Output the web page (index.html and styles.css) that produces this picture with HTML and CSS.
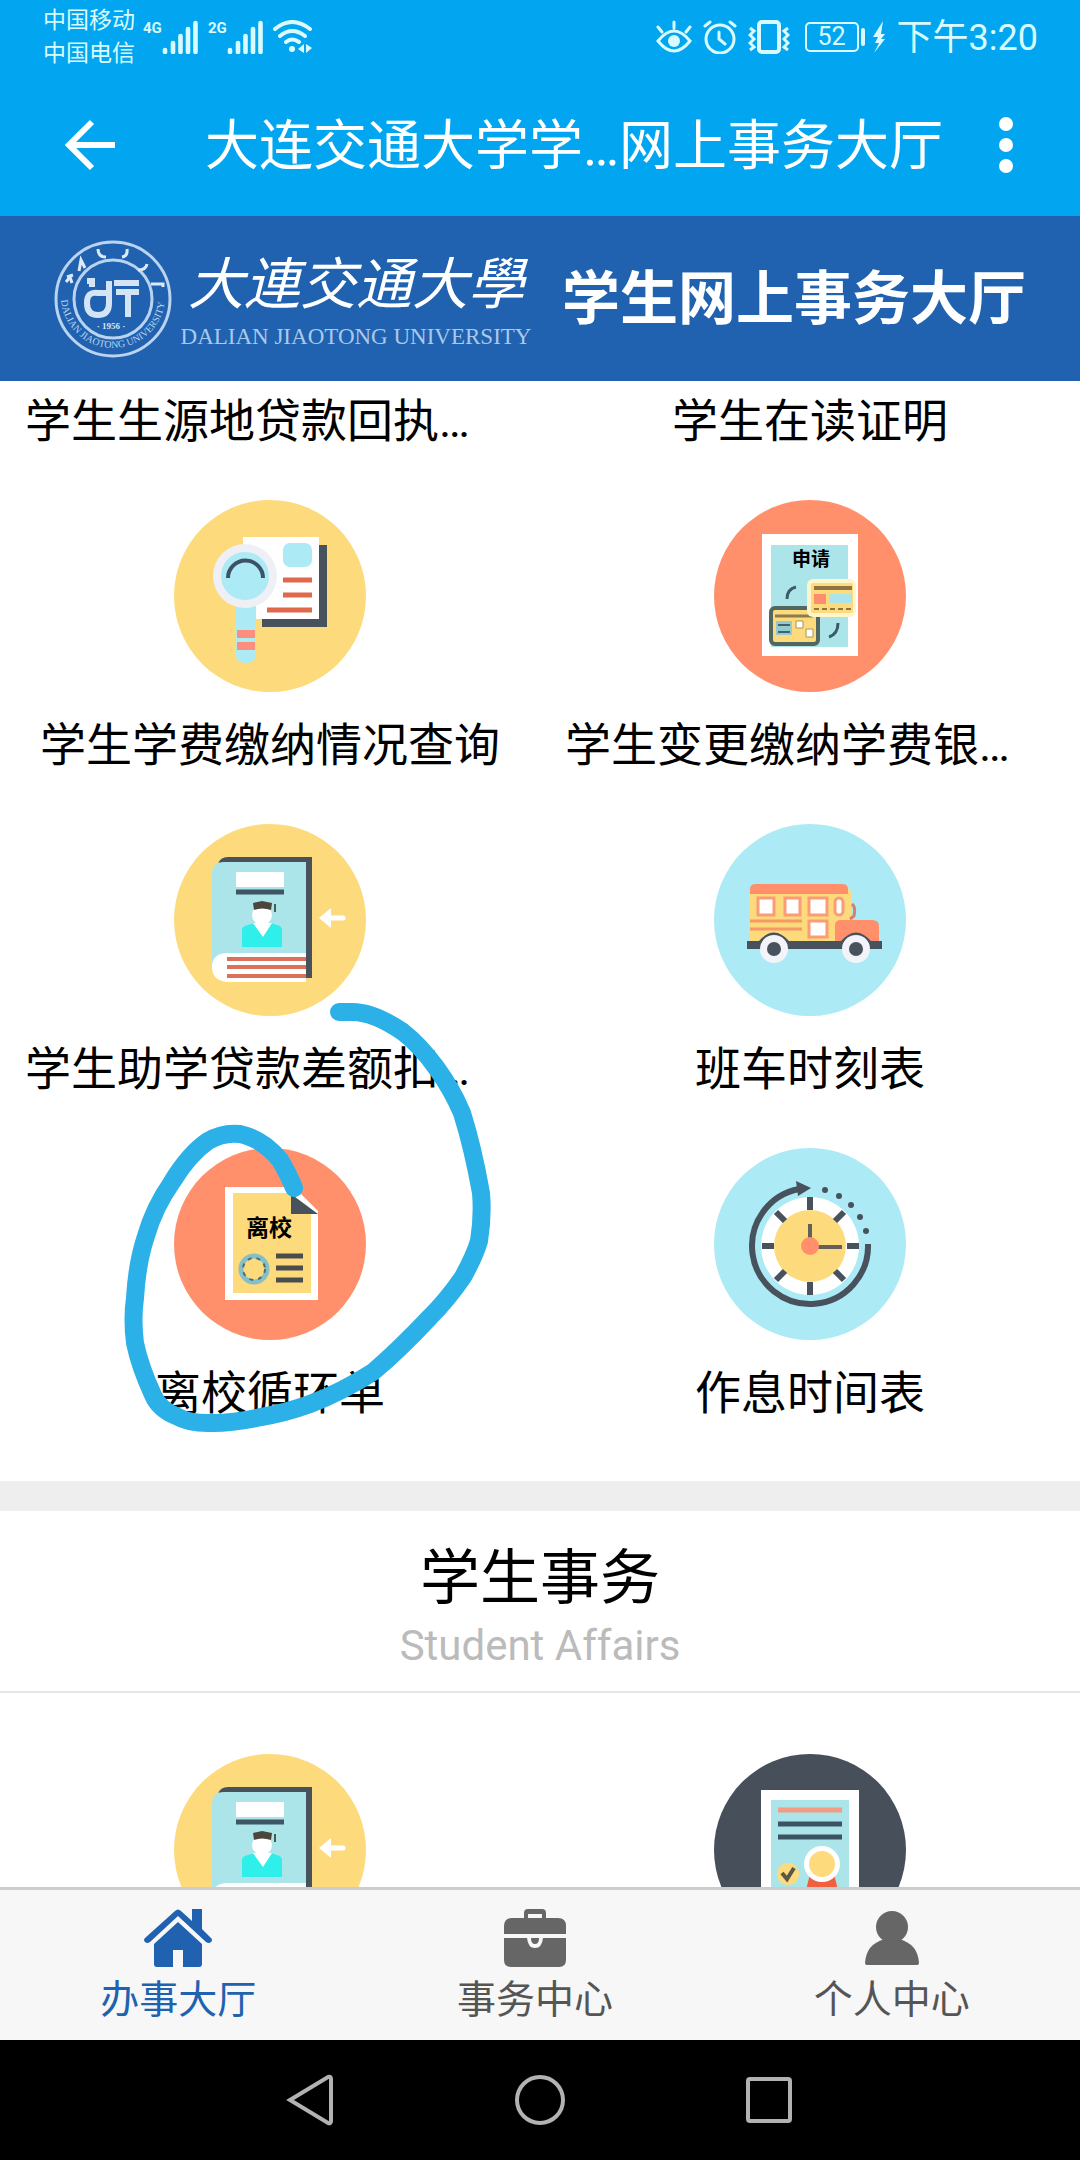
FILE: index.html
```html
<!DOCTYPE html>
<html lang="zh-CN">
<head>
<meta charset="utf-8">
<meta name="viewport" content="width=device-width, initial-scale=1">
<title>学生网上事务大厅</title>
<link rel="stylesheet" href="styles.css">
</head>
<body>
<svg class="defs" aria-hidden="true">
  <symbol id="signal" viewBox="0 0 36 34">
    <path d="M3 30v2M11 23v9M18.500 16v16M26 9v23M33.500 3v29" stroke="currentColor" stroke-width="4.600" stroke-linecap="round"/>
  </symbol>
  <symbol id="book" viewBox="0 0 192 192">
    <circle cx="96" cy="96" r="96" fill="#fddb7c"/>
    <path d="M44 40q2-7 10-7h84v121h-8V40z" fill="#47525d"/>
    <path d="M38 146V50q0-12 12-12h82v108z" fill="#abe5ea"/>
    <path d="M62 48h48v15H62z" fill="#fff"/>
    <path d="M62 68h48" stroke="#3f5564" stroke-width="5"/>
    <path d="M68 123v-17q0-4 6-5l7-2 8 9 8-9 6 2q5 1 5 5v17z" fill="#2eefea"/>
    <path d="M79 99l10 14 9-14z" fill="#fff"/>
    <circle cx="88" cy="91" r="10" fill="#fff"/>
    <path d="M79 79l9-2 10 2-1 7q-9-3-17 0z" fill="#4b463d"/>
    <path d="M101 80v8" stroke="#4b5a52" stroke-width="2"/>
    <path d="M132 129H52q-14 1-14 14t14 15h80z" fill="#fff"/>
    <path d="M53 135h79M53 143h79M53 152h79" stroke="#da725b" stroke-width="4"/>
    <path d="M135 128v26" stroke="#47525d" stroke-width="5"/>
    <path d="M169 94h-18" stroke="#fff" stroke-width="5" stroke-linecap="round"/>
    <path d="M145 94l12-10v20z" fill="#fff"/>
  </symbol>
</svg>

<div class="screen">
  <header class="top">
    <div class="status">
      <div class="carriers"><span>中国移动</span><span>中国电信</span></div>
      <div class="signals">
        <span class="net">4G</span><svg class="bars"><use href="#signal"/></svg>
        <span class="net">2G</span><svg class="bars"><use href="#signal"/></svg>
      </div>
      <svg class="wifi" viewBox="0 0 40 34" fill="none" stroke="currentColor" stroke-width="4" stroke-linecap="round">
        <path d="M2 9Q19-5 37 9M7 16q12-10 25 0M13 22q6-5 13 0"/>
        <circle cx="19" cy="29" r="3" fill="currentColor" stroke="none"/>
        <path d="M31 24v9l-6-4zM33 24v9l6-5z" fill="currentColor" stroke="none"/>
      </svg>
      <div class="status-right">
        <svg width="36" height="34" viewBox="0 0 36 34" fill="none" stroke="currentColor" stroke-width="3" stroke-linecap="round">
          <path d="M2 21q16-20 32 0-16 20-32 0zM18 2v6M2 7l4 5M34 7l-4 5"/><circle cx="18" cy="21" r="6" fill="currentColor" stroke="none"/>
        </svg>
        <svg width="34" height="34" viewBox="0 0 34 34" fill="none" stroke="currentColor" stroke-width="3" stroke-linecap="round">
          <circle cx="17" cy="19" r="14"/><path d="M16 12v7l6 5M2 6l5-4M32 6l-5-4"/>
        </svg>
        <svg width="42" height="34" viewBox="0 0 42 34" fill="none" stroke="currentColor" stroke-width="3">
          <rect x="11" y="2" width="20" height="30" rx="3" stroke-width="4"/>
          <path d="M2 8l4 3-4 4 4 4-4 4 4 4-4 3M40 8l-4 3 4 4-4 4 4 4-4 4 4 3"/>
        </svg>
        <span class="battery"><span class="level">52</span><span class="cap"></span></span>
        <svg width="14" height="34" viewBox="0 0 14 34" fill="currentColor"><path d="M11 1L1 17h5l-3 6h4L2 33l11-14H9l4-5H9z"/></svg>
        <time class="clock">下午3:20</time>
      </div>
    </div>
    <div class="titlebar">
      <button class="icon-button" type="button" aria-label="返回">
        <svg width="52" height="52" viewBox="0 0 52 52" fill="none" stroke="currentColor" stroke-width="6"><path d="M28 3L5 26l23 23M5 26h46"/></svg>
      </button>
      <h1 class="page-title">大连交通大学学…网上事务大厅</h1>
      <button class="icon-button more" type="button" aria-label="更多">
        <svg width="16" height="60" viewBox="0 0 16 60" fill="currentColor"><circle cx="8" cy="9" r="7"/><circle cx="8" cy="30" r="7"/><circle cx="8" cy="51" r="7"/></svg>
      </button>
    </div>
  </header>

  <div class="banner">
    <svg class="seal" viewBox="0 0 118 118" fill="none" stroke="#b9d3f0">
      <defs><path id="ring" d="M7 56a52 52 0 1 0 104 0"/></defs>
      <circle cx="59" cy="59" r="57" stroke-width="3"/>
      <circle cx="59" cy="59" r="39" stroke-width="3"/>
      <path d="M12 42l4-5 2 6M13 37l6-2M25 31l2-11 4 8M44 9q0 8 8 8M68 17q6-1 5-8M84 30q8 0 9-6M97 44h12v3" stroke="#dceafa" stroke-width="3"/>
      <path d="M33 41h5v6M55 41v22q0 12-11 12T33 63t11-10h9M60 43h25M62 52h23M74 54v23" stroke="#d3e4f7" stroke-width="6"/>
      <text class="seal-text" fill="#b9d3f0" stroke="none"><textPath href="#ring" startOffset="4">DALIAN JIAOTONG UNIVERSITY</textPath></text>
      <text class="seal-year" x="57" y="89" text-anchor="middle" fill="#d3e4f7" stroke="none">· 1956 ·</text>
    </svg>
    <div class="school">
      <span class="school-cn">大連交通大學</span>
      <span class="school-en">DALIAN JIAOTONG UNIVERSITY</span>
    </div>
    <strong class="hall">学生网上事务大厅</strong>
  </div>

  <main class="content">
    <section class="group">
      <div class="grid">
        <a class="card" href="#loan"><span class="label label-cut">学生生源地贷款回执…</span></a>
        <a class="card" href="#proof"><span class="label">学生在读证明</span></a>

        <a class="card" href="#fees">
          <svg class="icon" viewBox="0 0 192 192">
            <circle cx="96" cy="96" r="96" fill="#fddb7c"/>
            <path d="M88 45h65v82H88z" fill="#47525d"/>
            <path d="M69 37h76v82H69z" fill="#fff"/>
            <rect x="109" y="43" width="29" height="24" rx="7" fill="#aceaf5"/>
            <path d="M109 80h29M109 95h29M93 110h45" stroke="#e0684d" stroke-width="5"/>
            <path d="M62 104h20v48q0 11-10 11t-10-8z" fill="#aceaf5"/>
            <path d="M63 134h18M63 146h18" stroke="#fa8f7b" stroke-width="8"/>
            <circle cx="71" cy="76" r="32" fill="#eef0f6"/>
            <circle cx="71" cy="76" r="24" fill="#aceaf5"/>
            <path d="M54 78a17 17 0 1 1 35 0" fill="none" stroke="#3d5365" stroke-width="4"/>
          </svg>
          <span class="label">学生学费缴纳情况查询</span>
        </a>
        <a class="card" href="#bank">
          <svg class="icon" viewBox="0 0 192 192">
            <circle cx="96" cy="96" r="96" fill="#ff906b"/>
            <path d="M48 34h96v122H48z" fill="#fff"/>
            <path d="M57 45h77v102H57z" fill="#abe5ea"/>
            <text class="stamp-small" x="97" y="66" text-anchor="middle">申请</text>
            <rect x="57" y="108" width="47" height="36" rx="4" fill="#fddb7c" stroke="#52675f" stroke-width="4"/>
            <path d="M61 116h38" stroke="#8b7b4d" stroke-width="3"/>
            <path d="M62 121h16v14H62z" fill="#94cbd0"/>
            <path d="M64 125h12M64 132h12" stroke="#43606b" stroke-width="2"/>
            <path d="M82 121h7v7h-7zM92 129h7v8h-7z" fill="#fff" stroke="#ab9457"/>
            <rect x="93" y="79" width="49" height="38" rx="6" fill="#fff4ca"/>
            <rect x="97" y="83" width="42" height="30" rx="2" fill="#fddb7c"/>
            <path d="M100 88h38" stroke="#8d7444" stroke-width="4"/>
            <path d="M100 94h12v10h-12z" fill="#fd8d70"/><path d="M115 94h23v9h-23z" fill="#abe5ea"/>
            <path d="M100 109h38" stroke="#8d7444" stroke-width="2" stroke-dasharray="5 3"/>
            <path d="M73 99q0-10 9-12M124 123q0 11-9 14" fill="none" stroke="#3d5b66" stroke-width="3"/>
          </svg>
          <span class="label label-cut">学生变更缴纳学费银…</span>
        </a>

        <a class="card" href="#balance">
          <svg class="icon"><use href="#book"/></svg>
          <span class="label label-cut">学生助学贷款差额扣…</span>
        </a>
        <a class="card" href="#bus">
          <svg class="icon" viewBox="0 0 192 192">
            <circle cx="96" cy="96" r="96" fill="#aceaf5"/>
            <path d="M36 65h101v53H36z" fill="#fddb7c"/>
            <path d="M36 70v-5q0-5 6-5h86q6 0 6 5v5z" fill="#ff906b"/>
            <path d="M36 97h52M36 105h52" stroke="#f59a64" stroke-width="3"/>
            <g fill="#fff" stroke="#fb9c76" stroke-width="3"><path d="M44 74h16v17H44zM71 74h15v17H71zM95 74h18v17H95zM95 97h18v16H95z"/><rect x="121" y="74" width="8" height="17" rx="4"/></g>
            <path d="M121 118v-17q0-5 6-5h31q7 0 7 6v16z" fill="#ff906b"/>
            <path d="M138 80q4 3 2 12l-4 3" fill="none" stroke="#d77e6c" stroke-width="3"/>
            <path d="M33 117h135v8H33z" fill="#47525d"/>
            <path d="M45 117q15-17 30 0zM127 117q15-17 30 0z" fill="#47525d"/>
            <g fill="#f2f4f9"><circle cx="60" cy="125" r="14"/><circle cx="142" cy="125" r="14"/></g>
            <g fill="#47525d"><circle cx="60" cy="125" r="7"/><circle cx="142" cy="125" r="7"/></g>
          </svg>
          <span class="label">班车时刻表</span>
        </a>

        <a class="card marked" href="#leave">
          <svg class="icon" viewBox="0 0 192 192">
            <circle cx="96" cy="96" r="96" fill="#ff906b"/>
            <path d="M51 39h69l24 24v89H51z" fill="#fff"/>
            <path d="M59 45h58v20h20v80H59z" fill="#fddb7c"/>
            <path d="M117 46l27 20h-27z" fill="#47525d"/>
            <text class="stamp" x="95" y="88" text-anchor="middle">离校</text>
            <circle cx="80" cy="121" r="13" fill="#fddb7c" stroke="#85c0c8" stroke-width="5"/>
            <circle cx="80" cy="121" r="11" fill="none" stroke="#556a70" stroke-width="2" stroke-dasharray="4 5"/>
            <path d="M102 108h27M102 120h27M102 132h27" stroke="#4b4d4c" stroke-width="5"/>
          </svg>
          <span class="label">离校循环单</span>
          <svg class="scribble" viewBox="120 1000 380 440" fill="none" stroke="#2bb1e8" stroke-width="18" stroke-linecap="round" stroke-linejoin="round">
            <path d="M339 1012H352C370 1012 387 1021 403 1032C426 1050 449 1082 462 1113Q473 1148 481 1193Q483 1216 479 1241Q475 1255 463 1277C452 1293 441 1306 430 1317Q399 1350 373 1372Q342 1392 310 1404Q285 1413 261 1417Q234 1423 213 1423Q190 1424 176 1416Q159 1409 153 1395Q140 1367 135 1343Q132 1319 135 1298Q137 1263 146 1236Q154 1208 172 1182Q189 1154 208 1141Q223 1132 240 1134Q263 1139 280 1160Q289 1175 294 1188"/>
          </svg>
        </a>
        <a class="card" href="#timetable">
          <svg class="icon" viewBox="0 0 192 192">
            <circle cx="96" cy="96" r="96" fill="#aceaf5"/>
            <circle cx="96" cy="98" r="49" fill="#fff"/><circle cx="96" cy="98" r="36" fill="#fddb7c"/>
            <path d="M154 96A58 58 0 1 1 85 41" fill="none" stroke="#47525d" stroke-width="6"/>
            <path d="M82 33l15 7-13 8z" fill="#47525d"/>
            <g stroke="#47525d" stroke-width="6"><path d="M96 49v13M96 134v13M48 98h12M133 98h12M62 64l9 9M130 64l-9 9M62 132l9-9M130 132l-9-9"/></g>
            <g fill="#47525d"><circle cx="111" cy="42" r="3"/><circle cx="125" cy="48" r="3"/><circle cx="137" cy="57" r="3"/><circle cx="146" cy="69" r="3"/><circle cx="152" cy="83" r="3"/></g>
            <path d="M96 76v15M104 99h24" stroke="#626058" stroke-width="4"/>
            <circle cx="96" cy="98" r="9" fill="#ff906b"/>
          </svg>
          <span class="label">作息时间表</span>
        </a>
      </div>
    </section>

    <section class="group">
      <header class="group-head">
        <h2 class="group-title">学生事务</h2>
        <p class="group-sub">Student Affairs</p>
      </header>
      <div class="grid grid-affairs">
        <a class="card" href="#affairs-loan" aria-label="助学贷款"><svg class="icon"><use href="#book"/></svg></a>
        <a class="card" href="#affairs-award" aria-label="奖励证书">
          <svg class="icon" viewBox="0 0 192 192">
            <circle cx="96" cy="96" r="96" fill="#474f5b"/>
            <path d="M47 36h98v120H47z" fill="#fff"/><path d="M57 46h78v102H57z" fill="#abe5ea"/>
            <path d="M64 56h64" stroke="#f29c86" stroke-width="5"/><path d="M64 70h64M64 83h64" stroke="#3a5464" stroke-width="5"/>
            <path d="M96 120l-6 24 18-6 18 6-6-24z" fill="#f0603e"/>
            <circle cx="108" cy="110" r="18" fill="#fff"/><circle cx="108" cy="110" r="13" fill="#fddb7c"/>
            <circle cx="74" cy="120" r="11" fill="#fddb7c"/><path d="M68 119l5 6 7-11" fill="none" stroke="#5a5746" stroke-width="4"/>
          </svg>
        </a>
      </div>
    </section>
  </main>

  <nav class="tabs">
    <a class="tab tab-active" href="#hall">
      <svg width="68" height="58" viewBox="0 0 68 58" fill="currentColor">
        <path d="M48 0h10v20l9 9q2 2 0 4-2 2-5 0L34 7 6 33q-3 2-5 0t0-4L31 2q3-3 6 0l11 10z"/>
        <path d="M34 13l24 22v20q0 3-3 3H39V41H29v17H13q-3 0-3-3V35z"/>
      </svg>
      <span>办事大厅</span>
    </a>
    <a class="tab" href="#center">
      <svg width="62" height="58" viewBox="0 0 62 58" fill="#666">
        <path d="M20 9V4q0-4 4-4h14q4 0 4 4v5h12q8 0 8 8v8H0v-8q0-8 8-8zM24 9h14V5H24z" fill-rule="evenodd"/>
        <path d="M0 29h23q1 10 8 10t8-10h23v22q0 7-7 7H7q-7 0-7-7z"/>
        <path d="M27 29h8q0 6-4 6t-4-6z"/>
      </svg>
      <span>事务中心</span>
    </a>
    <a class="tab" href="#me">
      <svg width="56" height="58" viewBox="0 0 56 58" fill="#666">
        <circle cx="28" cy="18" r="16"/><path d="M21 30h14q19 5 20 24 0 2-2 2H3q-2 0-2-2 1-19 20-24z"/>
      </svg>
      <span>个人中心</span>
    </a>
  </nav>

  <div class="sysnav">
    <button type="button" aria-label="后退"><svg width="52" height="52" viewBox="0 0 52 52"><path d="M5 26L43 3q3-1 3 2v42q0 3-3 2z"/></svg></button>
    <button type="button" aria-label="主屏幕"><svg width="52" height="52" viewBox="0 0 52 52"><circle cx="26" cy="26" r="23"/></svg></button>
    <button type="button" aria-label="最近任务"><svg width="52" height="52" viewBox="0 0 52 52"><rect x="5" y="5" width="42" height="42" rx="2"/></svg></button>
  </div>
</div>
</body>
</html>
```
FILE: styles.css
```css
* { box-sizing: border-box; }

body {
  margin: 0;
  background: #fff;
  color: #000;
  font-family: Roboto, "Noto Sans CJK SC", sans-serif;
}

h1, h2, p { margin: 0; font-weight: 400; }
a { color: inherit; text-decoration: none; }
button { border: 0; padding: 0; background: none; color: inherit; }
svg { display: block; flex: none; }
.defs { position: absolute; width: 0; height: 0; }

.screen {
  display: flex;
  flex-direction: column;
  height: 100vh;
}

/* Status and title bars */
.top { flex: none; background: #02a6f0; color: #fff; }

.status {
  display: flex;
  align-items: center;
  height: 74px;
  padding: 0 42px 0 43px;
  color: #d9fbff;
}
.carriers { display: flex; flex-direction: column; width: 96px; font-size: 23px; line-height: 33px; }
.signals { display: flex; align-items: flex-start; margin-left: 4px; }
.net { width: 19px; font-size: 15px; line-height: 16px; font-weight: 700; }
.bars { width: 36px; height: 34px; margin-right: 10px; }
.wifi { width: 40px; height: 34px; }
.status-right { display: flex; align-items: center; gap: 11px; margin-left: auto; }
.battery { display: flex; align-items: center; gap: 2px; margin: 0 -4px 0 4px; }
.level {
  width: 54px;
  border: 2px solid;
  border-radius: 5px;
  font-size: 25px;
  line-height: 26px;
  text-align: center;
}
.cap { width: 4px; height: 18px; border-radius: 2px; background: currentColor; }
.clock { padding-top: 2px; font-size: 36px; line-height: 40px; }

.titlebar {
  display: flex;
  align-items: center;
  height: 142px;
  padding: 0 64px;
}
.icon-button { display: flex; }
.page-title {
  flex: 1;
  padding: 4px 0 0 36px;
  font-size: 54px;
  line-height: 80px;
  text-align: center;
  white-space: nowrap;
}
.more { width: 20px; justify-content: center; }

/* School banner */
.banner {
  display: flex;
  flex: none;
  align-items: center;
  justify-content: space-between;
  height: 165px;
  padding: 0 54px;
  background: #2062af;
  color: #fff;
}
.seal { width: 118px; height: 118px; }
.seal-text { font: 10px "Liberation Serif", serif; }
.seal-year { font: 700 9px "Liberation Serif", serif; }
.school { display: flex; flex-direction: column; align-items: center; margin-right: 22px; white-space: nowrap; }
.school-cn { font-size: 56px; line-height: 76px; font-style: italic; }
.school-en { font: 23px/28px "Liberation Serif", serif; color: #a9c9ec; }
.hall { font-size: 58px; line-height: 80px; white-space: nowrap; }

.content { flex: 1; min-height: 0; overflow: hidden; }
.group + .group { border-top: 30px solid #eee; }
.grid {
  display: grid;
  grid-template-columns: 1fr 1fr;
  row-gap: 47px;
  padding: 8px 0 56px;
}
.grid-affairs { padding-top: 61px; }
.card { display: flex; flex-direction: column; align-items: center; gap: 21px; }
.icon { width: 192px; height: 192px; }
.label {
  width: 490px;
  font-size: 46px;
  line-height: 64px;
  text-align: center;
  white-space: nowrap;
}
.label-cut { text-align: left; }
.stamp, .stamp-small { font-weight: 700; font-size: 23px; }
.stamp-small { font-size: 19px; }

.marked { position: relative; }
.scribble {
  position: absolute;
  top: -148px;
  left: 50%;
  width: 380px;
  height: 440px;
  margin-left: -150px;
  pointer-events: none;
}

.group-head { padding: 26px 0 20px; border-bottom: 2px solid #e6e6e6; text-align: center; }
.group-title { font-size: 60px; line-height: 84px; }
.group-sub { font-size: 42px; line-height: 50px; color: #bbb; }

/* Bottom tabs and system keys */
.tabs {
  display: flex;
  flex: none;
  height: 153px;
  padding: 19px 10px 0 0;
  border-top: 3px solid #ccc;
  background: #f7f7f7;
  color: #555;
}
.tab {
  display: flex;
  flex: 1;
  flex-direction: column;
  align-items: center;
  gap: 5px;
  font-size: 39px;
  line-height: 56px;
}
.tab-active { color: #2062af; }

.sysnav {
  display: flex;
  flex: none;
  align-items: center;
  justify-content: center;
  gap: 177px;
  height: 120px;
  background: #000;
}
.sysnav svg { fill: none; stroke: #b2b2b2; stroke-width: 4; }
```
